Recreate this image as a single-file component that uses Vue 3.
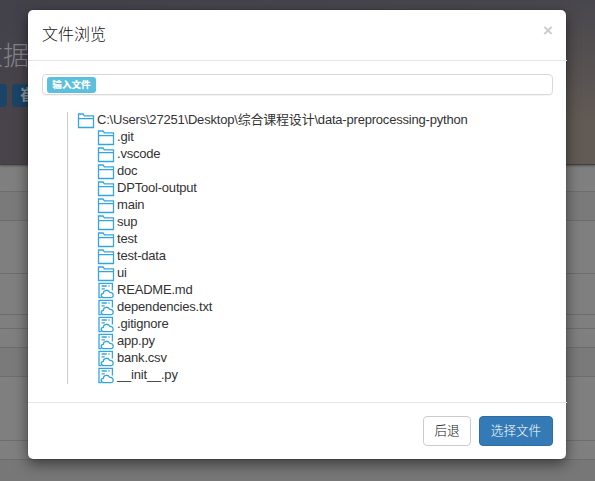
<script setup>
const folders = ['.git', '.vscode', 'doc', 'DPTool-output', 'main', 'sup', 'test', 'test-data', 'ui']
const files = ['README.md', 'dependencies.txt', '.gitignore', 'app.py', 'bank.csv', '__init__.py']
const entries = [
  ...folders.map((name) => ({ name, type: 'folder' })),
  ...files.map((name) => ({ name, type: 'file' })),
]
</script>

<template>
  <div class="page">
    <header class="banner">
      <h1 class="banner-title">数据</h1>
      <div class="banner-tags"><span class="tag first"></span><span class="tag">崔</span></div>
    </header>
    <div class="strip s1"></div>
    <div class="strip s2 shade"></div>
    <div class="strip s3"></div>
    <div class="strip s4"></div>
    <div class="strip s5"></div>
    <div class="strip s6"></div>
    <div class="strip s7 shade"></div>
    <div class="strip s8"></div>
    <div class="strip s9"></div>
    <div class="rest"></div>

    <section class="modal">
      <div class="modal-header">
        <h4 class="title">文件浏览</h4>
        <button class="close">×</button>
      </div>
      <div class="modal-body">
        <div class="field"><span class="label">输入文件</span></div>
        <div class="tree">
          <div class="row">
            <svg class="icon" viewBox="0 0 18 17"><path d="M1.5 15.5V2h4.6l1.3 1.8h9.1v11.7zM1.5 6.6h15" /></svg>
            <span class="name">C:\Users\27251\Desktop\综合课程设计\data-preprocessing-python</span>
          </div>
          <div v-for="entry in entries" :key="entry.name" class="row child">
            <svg v-if="entry.type === 'folder'" class="icon" viewBox="0 0 18 17">
              <path d="M1.5 15.5V2h4.6l1.3 1.8h9.1v11.7zM1.5 6.6h15" />
            </svg>
            <svg v-else class="icon" viewBox="0 0 18 17">
              <path d="M4.2 15.7H2V1.4h13.4v7.2" />
              <path d="M4.6 4h5.2M11.4 4h1.2M4.6 6.8h3.2" />
              <path d="M6.8 15.7c-3.3 0-3.5-4 -.5-4.4.1-3.6 5.3-4.1 6.4-.9 4.3-.2 4.6 5.3 1.1 5.3z" />
            </svg>
            <span class="name">{{ entry.name }}</span>
          </div>
        </div>
      </div>
      <div class="modal-footer">
        <button class="btn">后退</button>
        <button class="btn primary">选择文件</button>
      </div>
    </section>
  </div>
</template>

<style>
body { margin: 0; overflow: hidden; }
</style>

<style scoped>
* { box-sizing: border-box; }
.page {
  position: relative;
  display: flex;
  flex-direction: column;
  width: 595px;
  height: 481px;
  overflow: hidden;
  background: #7f7f7f;
  font-family: "Liberation Sans", "Noto Sans CJK SC", sans-serif;
}
.banner {
  flex: none;
  height: 165px;
  padding-top: 38px;
  border-bottom: 1px solid #41403f;
  background: linear-gradient(172deg, rgba(62, 62, 72, 0), rgba(62, 62, 72, 0) 25%, rgba(62, 62, 72, 0.8)), linear-gradient(90deg, #48434b, #625a54);
  background: linear-gradient(180deg, rgba(64, 65, 75, 0.75), rgba(64, 65, 75, 0) 75%), linear-gradient(90deg, #48434a, #625a54);
  box-shadow: 0 1px 2px rgba(0, 0, 0, 0.35);
}
.banner-title {
  margin: 0 0 0 -23px;
  font-size: 26px;
  line-height: 36px;
  font-weight: 300;
  color: #85838a;
}
.banner-tags { display: flex; gap: 5px; margin-top: 10px; }
.tag {
  width: 50px;
  height: 23px;
  padding-left: 8px;
  border-radius: 4px;
  background: #1a4467;
  color: #8b949b;
  font-size: 15px;
  line-height: 22px;
  font-weight: 700;
}
.tag.first { width: 7px; padding: 0; border-radius: 0 4px 4px 0; }
.strip { flex: none; border-bottom: 1px solid #6d6d6d; }
.shade { background: #7a7a7a; }
.s1 { height: 27px; }
.s2 { height: 29px; }
.s3 { height: 53px; }
.s4 { height: 41px; }
.s5 { height: 14px; }
.s6 { height: 19px; }
.s7 { height: 29px; }
.s8 { height: 64px; }
.s9 { height: 19px; }
.rest { flex: 1; background: #777; }

.modal {
  position: absolute;
  left: 28px;
  top: 10px;
  display: flex;
  flex-direction: column;
  width: 538px;
  height: 449px;
  border-radius: 5px;
  background: #fff;
  box-shadow: 0 0 1px rgba(0, 0, 0, 0.6), 0 5px 14px rgba(0, 0, 0, 0.5);
  color: #333;
}
.modal-header {
  display: flex;
  justify-content: space-between;
  width: 539px;
  height: 51px;
  padding: 14px 14px 0 14px;
  border-bottom: 1px solid #e5e5e5;
}
.title { margin: 0; font-size: 16px; line-height: 21px; font-weight: 300; color: #111; }
.close {
  height: 14px;
  padding: 0;
  border: 0;
  background: none;
  color: #ccc;
  font: 700 17px/12px "Liberation Sans", sans-serif;
}
.modal-body { flex: 1; min-height: 0; padding: 13px 13px 0 14px; }
.field {
  display: flex;
  height: 21px;
  padding: 2px 4px;
  border: 1px solid #d9d9d9;
  border-radius: 4px;
  box-shadow: 0 1px 1px rgba(0, 0, 0, 0.05);
}
.label {
  width: 49px;
  height: 16px;
  border-radius: 3px;
  background: #5bc0de;
  color: #fff;
  font-size: 9.6px;
  line-height: 16px;
  font-weight: 900;
  text-align: center;
  white-space: nowrap;
}
.tree {
  height: 272px;
  margin: 17px 0 0 25px;
  padding-left: 9px;
  border-left: 1px solid #ccc;
  overflow: hidden;
}
.row { display: flex; height: 17px; align-items: flex-start; }
.child { padding-left: 20px; }
.icon {
  flex: none;
  width: 18px;
  height: 17px;
  fill: none;
  stroke: #35a6dd;
  stroke-width: 1.3;
}
.name {
  margin-left: 2px;
  font-size: 13px;
  line-height: 16px;
  letter-spacing: -0.2px;
  white-space: nowrap;
}
.modal-footer {
  display: flex;
  justify-content: flex-end;
  gap: 8px;
  width: 539px;
  height: 57px;
  padding: 13px 14px 0;
  border-top: 1px solid #e5e5e5;
}
.btn {
  width: 48px;
  height: 30px;
  padding: 0;
  border: 1px solid #ccc;
  border-radius: 4px;
  background: #fff;
  color: #111;
  font: 300 12.6px/24px "Noto Sans CJK SC", sans-serif;
}
.btn { padding-bottom: 2px; }
.btn.primary { width: 74px; border-color: #2e6da4; background: #337ab7; color: #fff; }
</style>
